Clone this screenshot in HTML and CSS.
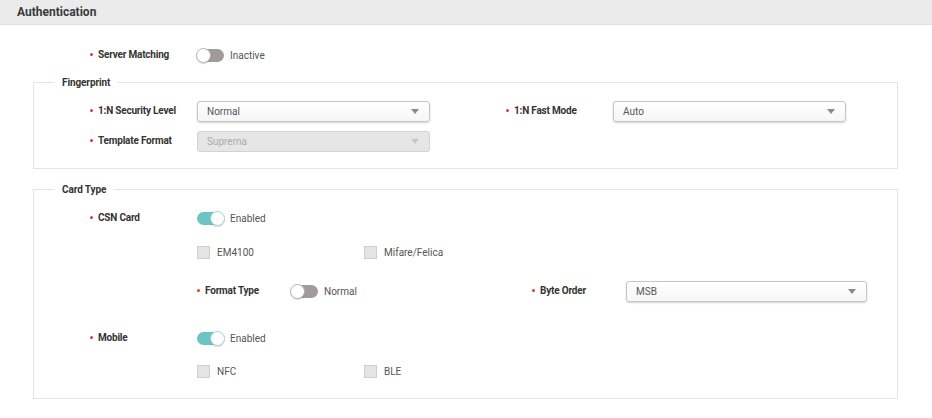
FILE: index.html
```html
<!DOCTYPE html>
<html>
<head>
<meta charset="utf-8">
<link rel="stylesheet" href="styles.css">
</head>
<body>
<div class="header"><h1 class="title">Authentication</h1></div>
<div class="content">
  <div class="row server">
    <div class="field">
      <div class="label req">Server Matching</div>
      <div class="toggle-wrap"><span class="toggle"></span><span class="val">Inactive</span></div>
    </div>
  </div>

  <fieldset class="group fp">
    <legend>Fingerprint</legend>
    <div class="row">
      <div class="field col-left">
        <div class="label req">1:N Security Level</div>
        <div class="select"><span>Normal</span><i class="arrow"></i></div>
      </div>
      <div class="field">
        <div class="label req">1:N Fast Mode</div>
        <div class="select"><span>Auto</span><i class="arrow"></i></div>
      </div>
    </div>
    <div class="row">
      <div class="field col-left">
        <div class="label req">Template Format</div>
        <div class="select disabled"><span>Suprema</span><i class="arrow"></i></div>
      </div>
    </div>
  </fieldset>

  <fieldset class="group card">
    <legend>Card Type</legend>
    <div class="row">
      <div class="field">
        <div class="label req">CSN Card</div>
        <div class="toggle-wrap"><span class="toggle on"></span><span class="val">Enabled</span></div>
      </div>
    </div>
    <div class="row sub sp4">
      <label class="check"><span class="box"></span>EM4100</label>
      <label class="check"><span class="box"></span>Mifare/Felica</label>
    </div>
    <div class="row sub sp9">
      <div class="field sub-left">
        <div class="label req short">Format Type</div>
        <div class="toggle-wrap"><span class="toggle"></span><span class="val">Normal</span></div>
      </div>
      <div class="field">
        <div class="label req short">Byte Order</div>
        <div class="select wide"><span>MSB</span><i class="arrow"></i></div>
      </div>
    </div>
    <div class="row sp17">
      <div class="field">
        <div class="label req">Mobile</div>
        <div class="toggle-wrap"><span class="toggle on"></span><span class="val">Enabled</span></div>
      </div>
    </div>
    <div class="row sub sp3">
      <label class="check"><span class="box"></span>NFC</label>
      <label class="check"><span class="box"></span>BLE</label>
    </div>
  </fieldset>
</div>
</body>
</html>
```
FILE: styles.css
```css
* { box-sizing: border-box; }
html, body { margin: 0; padding: 0; background: #fff; }
body {
  font-family: Roboto, "Liberation Sans", Arial, sans-serif;
  font-size: 10px;
  color: #333;
  width: 932px;
  height: 418px;
  overflow: hidden;
}
.header {
  height: 25px;
  background: #ebebeb;
  border-bottom: 1px solid #e0e0e0;
  display: flex;
  align-items: center;
  padding-left: 17px;
}
.title {
  margin: 0;
  font-size: 12px;
  font-weight: 700;
  color: #3a3a3a;
}
.content {
  padding: 15px 34px 0 33px;
}
.row {
  height: 30px;
  display: flex;
  align-items: center;
  padding-left: 56px;
}
.server { padding-left: 57px; margin-bottom: 6px; }
.field { display: flex; align-items: center; }
.col-left { width: 416px; }
.label {
  width: 107px;
  font-size: 10px;
  font-weight: 700;
  letter-spacing: -0.2px;
  color: #333;
  display: flex;
  align-items: center;
  margin-top: -2px;
}
.req::before {
  content: "";
  width: 3px;
  height: 3px;
  border-radius: 50%;
  background: #e53935;
  margin-right: 5px;
  flex: none;
}
.label.short { width: 94px; }
.val { color: #555; font-size: 10px; margin-left: 6px; }
.toggle-wrap { display: flex; align-items: center; }
.toggle {
  position: relative;
  display: inline-block;
  width: 27px;
  height: 13px;
  border-radius: 7px;
  background: #a19a9b;
}
.toggle::after {
  content: "";
  position: absolute;
  top: -1px;
  left: -1px;
  width: 15px;
  height: 15px;
  border-radius: 50%;
  background: #fff;
  border: 1px solid #b5b5b5;
  box-shadow: 0 1px 1px rgba(0,0,0,.15);
  box-sizing: border-box;
}
.toggle.on { background: #6cc4c4; }
.toggle.on::after { left: auto; right: -1px; border-color: #9dd6d6; }
.select {
  width: 233px;
  height: 21px;
  border: 1px solid #c6c6c6;
  border-radius: 3px;
  background: linear-gradient(#ffffff, #f6f6f6);
  box-shadow: 0 1px 2px rgba(0,0,0,.18);
  display: flex;
  align-items: center;
  justify-content: space-between;
  padding: 0 10px 0 9px;
  color: #555;
  font-size: 10px;
}
.select.wide { width: 241px; }
.select.disabled {
  background: #e6e6e6;
  border-color: #d3d3d3;
  box-shadow: none;
  color: #aaa;
}
.arrow {
  width: 0;
  height: 0;
  border-left: 4px solid transparent;
  border-right: 4px solid transparent;
  border-top: 5px solid #8a8a8a;
}
.select.disabled .arrow { border-top-color: #c8c8c8; }
.group {
  margin: 0;
  padding: 7px 0 12px;
  border: 1px solid #e4e4e4;
  min-width: 0;
}
.group legend {
  margin-left: 20px;
  padding: 0 8px;
  font-size: 10px;
  font-weight: 700;
  letter-spacing: -0.1px;
  color: #333;
  line-height: 13px;
}
.card { margin-top: 14px; padding: 7px 0 12px; }
.sub { padding-left: 163px; }
.check {
  display: flex;
  align-items: center;
  width: 167px;
  color: #555;
  font-size: 10px;
}
.box {
  width: 13px;
  height: 13px;
  background: #e4e4e4;
  border: 1px solid #cfcfcf;
  margin-right: 7px;
}
.sub-left { width: 335px; }
.sp4 { margin-top: 4px; }
.sp9 { margin-top: 9px; }
.sp17 { margin-top: 17px; }
.sp3 { margin-top: 3px; }
```
